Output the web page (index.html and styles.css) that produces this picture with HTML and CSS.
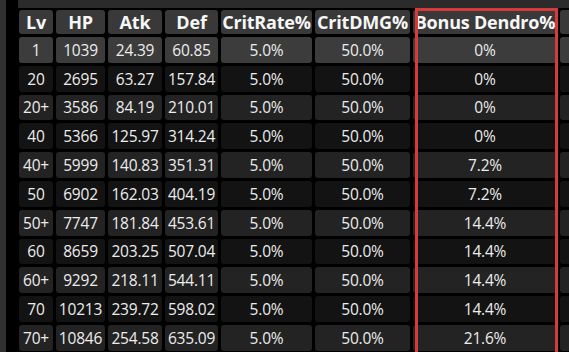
FILE: index.html
```html
<!DOCTYPE html>
<html>
<head>
<meta charset="utf-8">
<link rel="stylesheet" href="styles.css">
</head>
<body>
<div class="frame">
  <div class="side"></div>
  <div class="main">
    <div class="topbar"></div>
    <div class="grid">
      <div class="row head"><div>Lv</div><div>HP</div><div>Atk</div><div>Def</div><div>CritRate%</div><div>CritDMG%</div><div>Bonus Dendro%</div><div></div></div>
      <div class="row first"><div>1</div><div>1039</div><div>24.39</div><div>60.85</div><div>5.0%</div><div>50.0%</div><div>0%</div><div></div></div>
      <div class="row dark"><div>20</div><div>2695</div><div>63.27</div><div>157.84</div><div>5.0%</div><div>50.0%</div><div>0%</div><div></div></div>
      <div class="row light"><div>20+</div><div>3586</div><div>84.19</div><div>210.01</div><div>5.0%</div><div>50.0%</div><div>0%</div><div></div></div>
      <div class="row dark"><div>40</div><div>5366</div><div>125.97</div><div>314.24</div><div>5.0%</div><div>50.0%</div><div>0%</div><div></div></div>
      <div class="row light"><div>40+</div><div>5999</div><div>140.83</div><div>351.31</div><div>5.0%</div><div>50.0%</div><div>7.2%</div><div></div></div>
      <div class="row dark"><div>50</div><div>6902</div><div>162.03</div><div>404.19</div><div>5.0%</div><div>50.0%</div><div>7.2%</div><div></div></div>
      <div class="row light"><div>50+</div><div>7747</div><div>181.84</div><div>453.61</div><div>5.0%</div><div>50.0%</div><div>14.4%</div><div></div></div>
      <div class="row dark"><div>60</div><div>8659</div><div>203.25</div><div>507.04</div><div>5.0%</div><div>50.0%</div><div>14.4%</div><div></div></div>
      <div class="row light"><div>60+</div><div>9292</div><div>218.11</div><div>544.11</div><div>5.0%</div><div>50.0%</div><div>14.4%</div><div></div></div>
      <div class="row dark"><div>70</div><div>10213</div><div>239.72</div><div>598.02</div><div>5.0%</div><div>50.0%</div><div>14.4%</div><div></div></div>
      <div class="row light"><div>70+</div><div>10846</div><div>254.58</div><div>635.09</div><div>5.0%</div><div>50.0%</div><div>21.6%</div><div></div></div>
    </div>
    <div class="highlight"></div>
  </div>
</div>
</body>
</html>
```
FILE: styles.css
```css
html, body {
  margin: 0;
  padding: 0;
  background: #000;
  height: 100%;
  overflow: hidden;
}
.frame {
  display: flex;
  width: 569px;
  height: 352px;
  overflow: hidden;
  font-family: "Open Sans", "Noto Sans", sans-serif;
  color: #ececec;
}
.side {
  width: 6px;
  flex: none;
  background: #303030;
}
.main {
  position: relative;
  flex: 1;
  min-width: 0;
  margin-left: 12px;
  overflow: hidden;
}
.topbar {
  height: 8px;
  background: #2b2b2b;
  margin-bottom: 2px;
}
.grid {
  display: grid;
  grid-template-columns: 34px 49px 54px 53px 91px 95px 144px 40px;
  grid-template-rows: 24px;
  grid-auto-rows: 25.8px;
  gap: 3px;
  margin-left: 1px;
}
.row {
  display: contents;
}
.row > div {
  display: flex;
  align-items: center;
  justify-content: center;
  border-radius: 3px;
  font-size: 15.5px;
  font-weight: 500;
  white-space: nowrap;
  letter-spacing: -0.2px;
}
.head > div {
  background: #393939;
  font-size: 18px;
  font-weight: 700;
  color: #f6f6f6;
  letter-spacing: -0.2px;
}
.first > div {
  background: #3c3c3c;
}
.light > div {
  background: #232323;
}
.dark > div {
  background: #131313;
}
.highlight {
  position: absolute;
  left: 397px;
  top: 8px;
  width: 137px;
  height: 360px;
  border: 3px solid #d63a3a;
}
```
